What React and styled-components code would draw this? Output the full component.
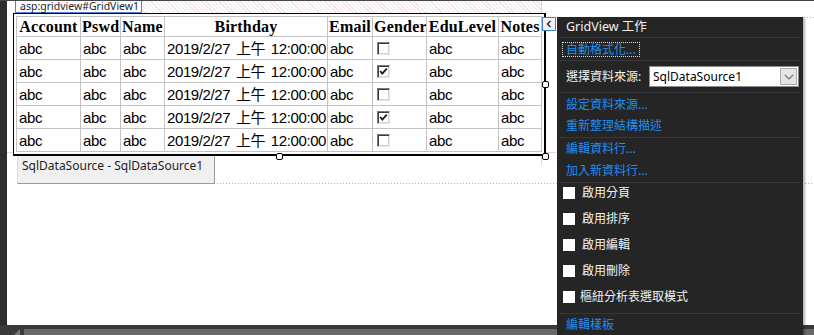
import React from "react";
import styled, { createGlobalStyle } from "styled-components";

const Global = createGlobalStyle`
  html, body { margin: 0; padding: 0; background: #fff; }
  body { width: 814px; height: 335px; overflow: hidden; font-family: "Noto Sans", "Noto Sans CJK TC", sans-serif; }
  * { box-sizing: border-box; }
`;

const Root = styled.div`
  position: relative;
  z-index: 0;
  width: 814px;
  height: 335px;
  overflow: hidden;
  display: flex;
  flex-direction: column;
  background: #fff;
`;

const TopEdge = styled.div`
  flex: none;
  height: 1px;
  background: #46464a;
`;

const Middle = styled.div`
  flex: 1;
  display: flex;
  min-height: 0;
`;

const LeftRail = styled.div`
  flex: none;
  width: 7px;
  background: #2d2d30;
`;

const Canvas = styled.div`
  flex: 1;
  display: flex;
  flex-direction: column;
  align-items: flex-start;
`;

const TagRow = styled.div`
  display: flex;
  height: 12px;
  padding-left: 8px;
  align-self: stretch;
`;

const Tag = styled.div`
  flex: none;
  width: 127px;
  height: 12px;
  background: #fff;
  border: 1px solid #4f83d1;
  border-top: none;
  padding-left: 4px;
  font: 10.5px/11px "Noto Sans", sans-serif;
  color: #1e1e1e;
  white-space: nowrap;
`;

const Hatch = styled.div`
  flex: none;
  width: 399px;
  height: 12px;
  background: repeating-linear-gradient(45deg, #fff 0 2px, #f3e3e3 2px 3px);
`;

const GridFrame = styled.div`
  margin-left: 6px;
  background: #fff;
  border: 1px solid #000;
  border-right-width: 2px;
  border-bottom-width: 2px;
  padding: 2px;
`;

const Table = styled.table`
  width: 525px;
  table-layout: fixed;
  border-collapse: collapse;
  background: #fff;
`;

const Th = styled.th`
  height: 20px;
  padding: 0 1px;
  border: 1px solid #c3c3c3;
  font: bold 16px/18px "Liberation Serif", "Noto Sans CJK TC", serif;
  letter-spacing: 0.2px;
  color: #000;
  text-align: center;
  white-space: nowrap;
  overflow: hidden;
`;

const Td = styled.td`
  height: 23px;
  padding: 1px 0 0 ${(p) => (p.$box ? 4 : 2)}px;
  border: 1px solid #c3c3c3;
  font: 15px/18px "Liberation Sans", "Noto Sans CJK TC", sans-serif;
  letter-spacing: -0.4px;
  word-spacing: 2px;
  color: #000;
  white-space: nowrap;
  overflow: hidden;
  vertical-align: middle;
`;

const ClassicBox = styled.span`
  display: block;
  width: 13px;
  height: 13px;
  border: 1px solid;
  border-color: #7a7a7a #e6e6e6 #e6e6e6 #7a7a7a;
  box-shadow: inset 1px 1px 0 #3c3c3c, inset -1px -1px 0 #d6d3cc;
  background: #fff;
`;

const DataSourceRow = styled.div`
  display: flex;
  align-self: stretch;
  margin-left: 10px;
`;

const SqlBox = styled.div`
  flex: none;
  width: 198px;
  height: 28px;
  background: #f0f0f0;
  border-left: 1px solid #dcdcdc;
  border-right: 1px solid #9a9a9a;
  border-bottom: 1px solid #9a9a9a;
  padding: 2px 0 0 4px;
  font: 12px/16px "Noto Sans", sans-serif;
  color: #1e1e1e;
  white-space: nowrap;
`;

const DottedFill = styled.div`
  flex: 1;
  align-self: flex-end;
  height: 1px;
  margin-left: 2px;
  background: repeating-linear-gradient(90deg, #b4b4b4 0 1px, transparent 1px 3px);
`;

const BottomBar = styled.div`
  flex: none;
  height: 10px;
  display: flex;
  align-items: flex-end;
  background: #3a3a3d;
`;

const Grip = styled.div`
  flex: none;
  width: 0;
  height: 0;
  margin: 0 4px 0 14px;
  border-left: 6px solid transparent;
  border-bottom: 6px solid #77777a;
`;

const ScrollTrack = styled.div`
  flex: 1;
  height: 6px;
  background: #686868;
`;

const Guide = styled.div`
  position: absolute;
  z-index: -1;
  background: #ead0d0;
  left: ${(p) => p.$x}px;
  top: ${(p) => p.$y}px;
  width: ${(p) => p.$w}px;
  height: ${(p) => p.$h}px;
`;

const DotGuide = styled.div`
  position: absolute;
  z-index: -1;
  left: 546px;
  right: 0;
  top: 17px;
  height: 1px;
  background: repeating-linear-gradient(90deg, #b4b4b4 0 1px, transparent 1px 3px);
`;

const Handle = styled.div`
  position: absolute;
  left: ${(p) => p.$x - 3}px;
  top: ${(p) => p.$y - 3}px;
  width: 7px;
  height: 7px;
  border: 1px solid #000;
  border-radius: 2px;
  background: #fff;
`;

const Toggle = styled.div`
  position: absolute;
  left: 542px;
  top: 17px;
  width: 14px;
  height: 14px;
  border: 1px solid #3d7fd6;
  background: #f2f2f2;
  display: flex;
  align-items: center;
  justify-content: center;
`;

const Panel = styled.div`
  position: absolute;
  left: 557px;
  top: 17px;
  width: 246px;
  height: 330px;
  background: #252526;
  color: #f1f1f1;
  box-shadow: 2px 1px 2px rgba(0, 0, 0, 0.3);
  font: 12px/1 "Noto Sans", "Noto Sans CJK TC", sans-serif;
  display: flex;
  flex-direction: column;
`;

const PanelTitle = styled.div`
  flex: none;
  height: 20px;
  display: flex;
  align-items: center;
  padding-left: 9px;
  font-size: 12.5px;
  color: #f1f1f1;
`;

const Sep = styled.div`
  flex: none;
  height: 1px;
  margin: 0 3px;
  background: #38383b;
`;

const Section = styled.div`
  flex: none;
  display: flex;
  flex-direction: column;
  padding: ${(p) => p.$pad || "0"};
  gap: ${(p) => p.$gap || 0}px;
`;

const LinkItem = styled.div`
  height: ${(p) => p.$h || 21}px;
  display: flex;
  align-items: center;
  padding-left: ${(p) => (p.$focus ? 5 : 9)}px;
  color: #1d8ff0;
  white-space: nowrap;
`;

const FocusBox = styled.span`
  height: 15px;
  display: flex;
  align-items: center;
  padding: 0 3px;
  border: 1px dotted #d8d8d8;
`;

const SourceRow = styled.div`
  height: 21px;
  display: flex;
  align-items: center;
  padding: 0 4px 0 9px;
`;

const SourceLabel = styled.span`
  flex: 1;
  color: #f1f1f1;
  white-space: nowrap;
`;

const Select = styled.div`
  flex: none;
  width: 150px;
  height: 21px;
  display: flex;
  align-items: center;
  background: #fff;
  border: 1px solid #8a8a8a;
  color: #000;
  padding-left: 3px;
`;

const SelectText = styled.span`
  flex: 1;
  font: 12px/1 "Noto Sans", sans-serif;
`;

const ArrowBtn = styled.span`
  flex: none;
  width: 17px;
  height: 17px;
  margin-right: 1px;
  background: #e5e5e5;
  border: 1px solid #acacac;
  display: flex;
  align-items: center;
  justify-content: center;
`;

const CheckRow = styled.div`
  height: 20px;
  display: flex;
  align-items: center;
  padding-left: 6px;
  color: #f1f1f1;
  white-space: nowrap;
`;

const DarkBox = styled.span`
  flex: none;
  width: 12px;
  height: 12px;
  background: #fff;
  margin-right: ${(p) => p.$gap || 7}px;
`;

const columns = [
  ["Account", 64],
  ["Pswd", 40],
  ["Name", 44],
  ["Birthday", 163],
  ["Email", 45],
  ["Gender", 54],
  ["EduLevel", 72],
  ["Notes", 43],
];

const rows = [false, true, false, true, false];

const CheckMark = () => (
  <svg width="11" height="11" viewBox="0 0 11 11" style={{ display: "block" }}>
    <path d="M2.2 5 L4.3 7.6 L8.8 2.6" fill="none" stroke="#1a1a1a" strokeWidth="1.8" />
  </svg>
);

export default function App() {
  return (
    <Root>
      <Global />
      <TopEdge />
      <Middle>
        <LeftRail />
        <Canvas>
          <TagRow>
            <Tag>asp:gridview#GridView1</Tag>
            <Hatch />
          </TagRow>
          <GridFrame>
            <Table>
              <colgroup>
                {columns.map(([n, w]) => (
                  <col key={n} style={{ width: w }} />
                ))}
              </colgroup>
              <thead>
                <tr>
                  {columns.map(([n]) => (
                    <Th key={n}>{n}</Th>
                  ))}
                </tr>
              </thead>
              <tbody>
                {rows.map((checked, i) => (
                  <tr key={i}>
                    <Td>abc</Td>
                    <Td>abc</Td>
                    <Td>abc</Td>
                    <Td>2019/2/27 上午 12:00:00</Td>
                    <Td>abc</Td>
                    <Td $box>
                      <ClassicBox>{checked && <CheckMark />}</ClassicBox>
                    </Td>
                    <Td>abc</Td>
                    <Td>abc</Td>
                  </tr>
                ))}
              </tbody>
            </Table>
          </GridFrame>
          <DataSourceRow>
            <SqlBox>SqlDataSource - SqlDataSource1</SqlBox>
            <DottedFill />
          </DataSourceRow>
        </Canvas>
      </Middle>
      <BottomBar>
        <Grip />
        <ScrollTrack />
      </BottomBar>

      <Guide $x={541} $y={0} $w={1} $h={165} />
      <Guide $x={7} $y={152} $w={549} $h={1} />
      <DotGuide />

      <Handle $x={545} $y={84} />
      <Handle $x={279} $y={156} />
      <Handle $x={545} $y={156} />

      <Toggle>
        <svg width="8" height="10" viewBox="0 0 8 10">
          <path d="M5.5 2 L2.5 5 L5.5 8" fill="none" stroke="#1c2f5a" strokeWidth="1.5" />
        </svg>
      </Toggle>

      <Panel>
        <PanelTitle>GridView 工作</PanelTitle>
        <Sep />
        <Section $pad="1px 0 0">
          <LinkItem $focus>
            <FocusBox>自動格式化...</FocusBox>
          </LinkItem>
        </Section>
        <Sep />
        <Section $pad="5px 0">
          <SourceRow>
            <SourceLabel>選擇資料來源:</SourceLabel>
            <Select>
              <SelectText>SqlDataSource1</SelectText>
              <ArrowBtn>
                <svg width="10" height="6" viewBox="0 0 10 6">
                  <path d="M1 1 L5 5 L9 1" fill="none" stroke="#6e6e6e" strokeWidth="1.1" />
                </svg>
              </ArrowBtn>
            </Select>
          </SourceRow>
        </Section>
        <Sep />
        <Section $pad="1px 0">
          <LinkItem>設定資料來源...</LinkItem>
          <LinkItem>重新整理結構描述</LinkItem>
        </Section>
        <Sep />
        <Section>
          <LinkItem $h={22}>編輯資料行...</LinkItem>
          <LinkItem $h={22}>加入新資料行...</LinkItem>
        </Section>
        <Sep />
        <Section $pad="0 0 6px" $gap={6}>
          <CheckRow>
            <DarkBox />
            啟用分頁
          </CheckRow>
          <CheckRow>
            <DarkBox />
            啟用排序
          </CheckRow>
          <CheckRow>
            <DarkBox />
            啟用編輯
          </CheckRow>
          <CheckRow>
            <DarkBox />
            啟用刪除
          </CheckRow>
          <CheckRow>
            <DarkBox $gap={5} />
            樞紐分析表選取模式
          </CheckRow>
        </Section>
        <Sep />
        <Section>
          <LinkItem>編輯樣板</LinkItem>
        </Section>
      </Panel>
    </Root>
  );
}
